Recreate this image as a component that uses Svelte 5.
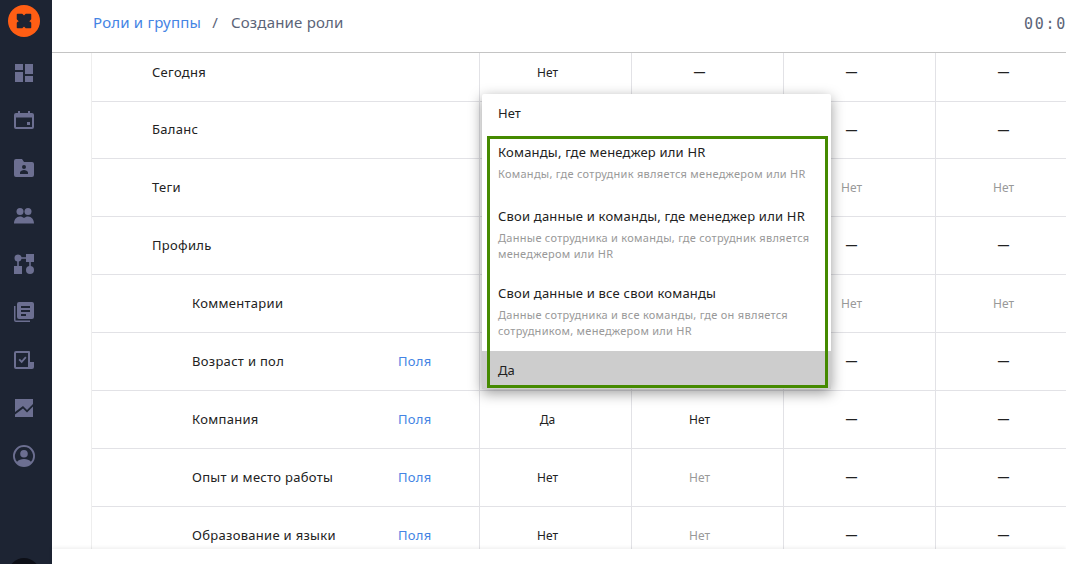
<script lang="ts">
	type Cell = { text: string; muted?: boolean };

	interface Row {
		name: string;
		level: number;
		fields?: boolean;
		short?: boolean;
		cells: Cell[];
	}

	const dash = { text: '—' };
	const no = { text: 'Нет' };
	const off = { text: 'Нет', muted: true };
	// cells behind the open dropdown stay empty
	const hidden = { text: '' };

	const rows: Row[] = [
		{ name: 'Сегодня', level: 1, cells: [no, dash, dash, dash] },
		{ name: 'Баланс', level: 1, short: true, cells: [hidden, hidden, dash, dash] },
		{ name: 'Теги', level: 1, cells: [hidden, hidden, off, off] },
		{ name: 'Профиль', level: 1, cells: [hidden, hidden, dash, dash] },
		{ name: 'Комментарии', level: 2, cells: [hidden, hidden, off, off] },
		{ name: 'Возраст и пол', level: 2, fields: true, cells: [hidden, hidden, dash, dash] },
		{ name: 'Компания', level: 2, fields: true, cells: [{ text: 'Да' }, no, dash, dash] },
		{ name: 'Опыт и место работы', level: 2, fields: true, cells: [no, off, dash, dash] },
		{ name: 'Образование и языки', level: 2, fields: true, cells: [no, off, dash, dash] }
	];
</script>

<div class="app">
	<aside class="sidebar">
		<div class="logo">
			<svg viewBox="0 0 32 32" width="32" height="32">
				<circle cx="16" cy="16" r="16" fill="#ff5e14" />
				<path
					d="M9.500 9.500h4.500l2 2 2-2h4.500v4.500l-2 2 2 2v4.500h-4.500l-2-2-2 2H9.500V18l2-2-2-2z"
					fill="#1d2433"
					stroke="#1d2433"
					stroke-width="1.500"
					stroke-linejoin="round"
				/>
			</svg>
		</div>
		<nav class="nav">
			<svg viewBox="0 0 24 24"><path d="M3 3h8v6H3zM3 11h8v10H3zM13 3h8v10h-8zM13 15h8v6h-8z" /></svg>
			<svg viewBox="0 0 24 24">
				<path
					fill-rule="evenodd"
					d="M6 2h2v2h8V2h2v2h2a2 2 0 0 1 2 2v12a2 2 0 0 1-2 2H4a2 2 0 0 1-2-2V6a2 2 0 0 1 2-2h2zM4 8.500V18h16V8.500zM15 13h3v3h-3z"
				/>
			</svg>
			<svg viewBox="0 1 24 24">
				<path
					fill-rule="evenodd"
					d="M4 3h6l2 3h8a2 2 0 0 1 2 2v11a2 2 0 0 1-2 2H4a2 2 0 0 1-2-2V5a2 2 0 0 1 2-2zM12 9a2 2 0 1 0 0 4 2 2 0 0 0 0-4zM8 18h8v-1.500c0-1.500-2.500-2.500-4-2.500s-4 1-4 2.500z"
				/>
			</svg>
			<svg viewBox="0 1.500 24 24">
				<circle cx="8" cy="8" r="3.500" /><circle cx="16" cy="8" r="3.500" />
				<path d="M2 20c0-4 2.500-7 6-7 1.500 0 3 .6 4 1.600 1-1 2.500-1.600 4-1.600 3.500 0 6 3 6 7z" />
			</svg>
			<svg viewBox="0 1 24 24">
				<circle cx="6" cy="6" r="3.500" /><rect x="14" y="2" width="8" height="8" />
				<rect x="2" y="14" width="8" height="8" /><circle cx="18" cy="18" r="4" />
				<path d="M6 5.200h12v1.600H6zM5.200 6h1.600v9H5.200zM17.200 6h1.600v9h-1.600z" />
			</svg>
			<svg viewBox="0 1 24 24">
				<path
					fill-rule="evenodd"
					d="M7 2h13a2 2 0 0 1 2 2v13a2 2 0 0 1-2 2H7a2 2 0 0 1-2-2V4a2 2 0 0 1 2-2zM9 6v2h9V6zM9 10v2h9v-2zM9 14v2h5v-2z"
				/>
				<path d="M2 6h1.500v14.500H18V22H4a2 2 0 0 1-2-2z" />
			</svg>
			<svg viewBox="0 1 24 24">
				<path
					fill-rule="evenodd"
					d="M4 3h13a1 1 0 0 1 1 1v10h4v5a2 2 0 0 1-2 2H4a2 2 0 0 1-2-2V5a2 2 0 0 1 2-2zM4 5v14h12V5z"
				/>
				<path d="M6.500 12l1.300-1.300 1.900 1.900 3.500-4.100 1.300 1.200-4.800 5.500z" />
			</svg>
			<svg viewBox="0 1 24 24">
				<path d="M3 3h18v5l-6 6-4-4-8 6zM3 21v-2.500l8-6 4 4 6-6V21z" />
			</svg>
			<svg viewBox="0 1 24 24">
				<path
					fill-rule="evenodd"
					d="M12 1a11 11 0 1 1 0 22 11 11 0 0 1 0-22zM12 3a9 9 0 0 0-6.900 14.800C6.500 15.800 9.200 15 12 15s5.500.8 6.900 2.800A9 9 0 0 0 12 3zM12 6a3.800 3.800 0 1 1 0 7.600A3.800 3.800 0 0 1 12 6z"
				/>
			</svg>
		</nav>
		<div class="avatar"></div>
	</aside>

	<div class="main">
		<header class="header">
			<div class="crumbs">
				<a href="#roles">Роли и группы</a>
				<span class="slash">/</span>
				<span>Создание роли</span>
			</div>
			<div class="timer">00:00:00</div>
		</header>

		<div class="scroll">
			<div class="table">
				{#each rows as row}
					<div class="row" class:short={row.short}>
						<div class="name" class:sub={row.level === 2}>
							<span>{row.name}</span>
							{#if row.fields}
								<a href="#fields">Поля</a>
							{/if}
						</div>
						{#each row.cells as cell}
							<div class="cell" class:muted={cell.muted} class:dash={cell.text === '—'}>
								{cell.text}
							</div>
						{/each}
					</div>
				{/each}
			</div>
		</div>
		<div class="footer"></div>
	</div>

	<div class="dropdown">
		<div class="plain first">Нет</div>
		<div class="option">
			<div class="title">Команды, где менеджер или HR</div>
			<div class="desc">Команды, где сотрудник является менеджером или HR</div>
		</div>
		<div class="option">
			<div class="title">Свои данные и команды, где менеджер или HR</div>
			<div class="desc">Данные сотрудника и команды, где сотрудник является менеджером или HR</div>
		</div>
		<div class="option">
			<div class="title">Свои данные и все свои команды</div>
			<div class="desc">Данные сотрудника и все команды, где он является сотрудником, менеджером или HR</div>
		</div>
		<div class="plain active">Да</div>
	</div>
	<div class="highlight"></div>
</div>

<style>
	:global(body) {
		overflow: hidden;
	}

	.app {
		position: relative;
		display: flex;
		width: 1066px;
		height: 564px;
		overflow: hidden;
		background: #fff;
		font-family: 'Noto Sans', sans-serif;
		color: #222;
	}

	.sidebar {
		display: flex;
		flex-direction: column;
		align-items: center;
		flex: none;
		width: 52px;
		padding: 5px 4px 0 0;
		box-sizing: border-box;
		background: #1d2433;
	}

	.logo {
		height: 32px;
		margin-bottom: 24px;
	}

	.nav {
		display: flex;
		flex-direction: column;
		gap: 24px;
	}

	.nav svg {
		display: block;
		width: 24px;
		height: 24px;
		fill: #6c6f91;
	}

	.avatar {
		flex: none;
		width: 32px;
		height: 32px;
		margin-top: auto;
		margin-bottom: -26px;
		border-radius: 50%;
		background: #0d0f17;
	}

	.main {
		display: flex;
		flex-direction: column;
		flex: 1;
		min-width: 0;
	}

	.header {
		display: flex;
		align-items: center;
		justify-content: space-between;
		flex: none;
		height: 44px;
		padding: 0 0 8px 41px;
		border-bottom: 1px solid #c4c4c4;
	}

	.crumbs {
		display: flex;
		gap: 11px;
		font-size: 15px;
		letter-spacing: 0.2px;
		color: #5b6478;
	}

	.crumbs a {
		color: #4484e4;
		text-decoration: none;
	}

	.slash {
		margin-right: 2px;
	}

	.timer {
		flex: none;
		width: 42px;
		margin-top: 4px;
		overflow: hidden;
		white-space: nowrap;
		font-family: 'DejaVu Sans Mono', monospace;
		font-size: 15px;
		letter-spacing: 1.700px;
		color: #5b6478;
	}

	.scroll {
		flex: 1;
		min-height: 0;
		overflow: hidden;
		padding-left: 39px;
	}

	.table {
		width: 996px;
		margin-top: -9px;
		border-left: 1px solid #eeeeee;
	}

	.row {
		display: grid;
		grid-template-columns: 387px repeat(4, 152px);
		height: 58px;
		box-sizing: border-box;
		border-bottom: 1px solid #e2e2e6;
	}

	.row.short {
		height: 57px;
	}

	.name {
		display: grid;
		grid-template-columns: 206px auto;
		align-items: center;
		padding: 0 0 2px 60px;
		font-size: 13px;
		letter-spacing: 0.3px;
	}

	.name.sub {
		padding-left: 100px;
	}

	.name a {
		color: #4484e4;
		text-decoration: none;
	}

	.cell {
		display: flex;
		align-items: center;
		justify-content: center;
		padding-right: 16px;
		border-left: 1px solid #e2e2e6;
		font-size: 12px;
	}

	.cell.muted {
		color: #999999;
	}

	.cell.dash {
		padding-bottom: 2px;
		font-weight: 600;
	}

	.footer {
		position: relative;
		flex: none;
		height: 15px;
		background: #fff;
		box-shadow: 0 -1px 4px rgba(0, 0, 0, 0.08);
	}

	.dropdown {
		position: absolute;
		left: 482px;
		top: 94px;
		width: 349px;
		border-radius: 2px;
		background: #fff;
		box-shadow: 0 4px 14px rgba(0, 0, 0, 0.4);
	}

	.plain {
		display: flex;
		align-items: center;
		padding: 0 16px;
		font-size: 13px;
	}

	.first {
		height: 38px;
	}

	.active {
		height: 38px;
		margin-top: 1px;
		background: #cdcdcd;
	}

	.option {
		box-sizing: border-box;
		min-height: 64px;
		padding: 10px 16px 11px;
	}

	.title {
		font-size: 13px;
		line-height: 20px;
		letter-spacing: 0.2px;
	}

	.desc {
		margin-top: 4px;
		font-size: 11px;
		line-height: 16px;
		letter-spacing: 0.28px;
		color: #999999;
	}

	.highlight {
		position: absolute;
		left: 487px;
		top: 136px;
		width: 341px;
		height: 252px;
		box-sizing: border-box;
		border: 3px solid #458a00;
	}
</style>
